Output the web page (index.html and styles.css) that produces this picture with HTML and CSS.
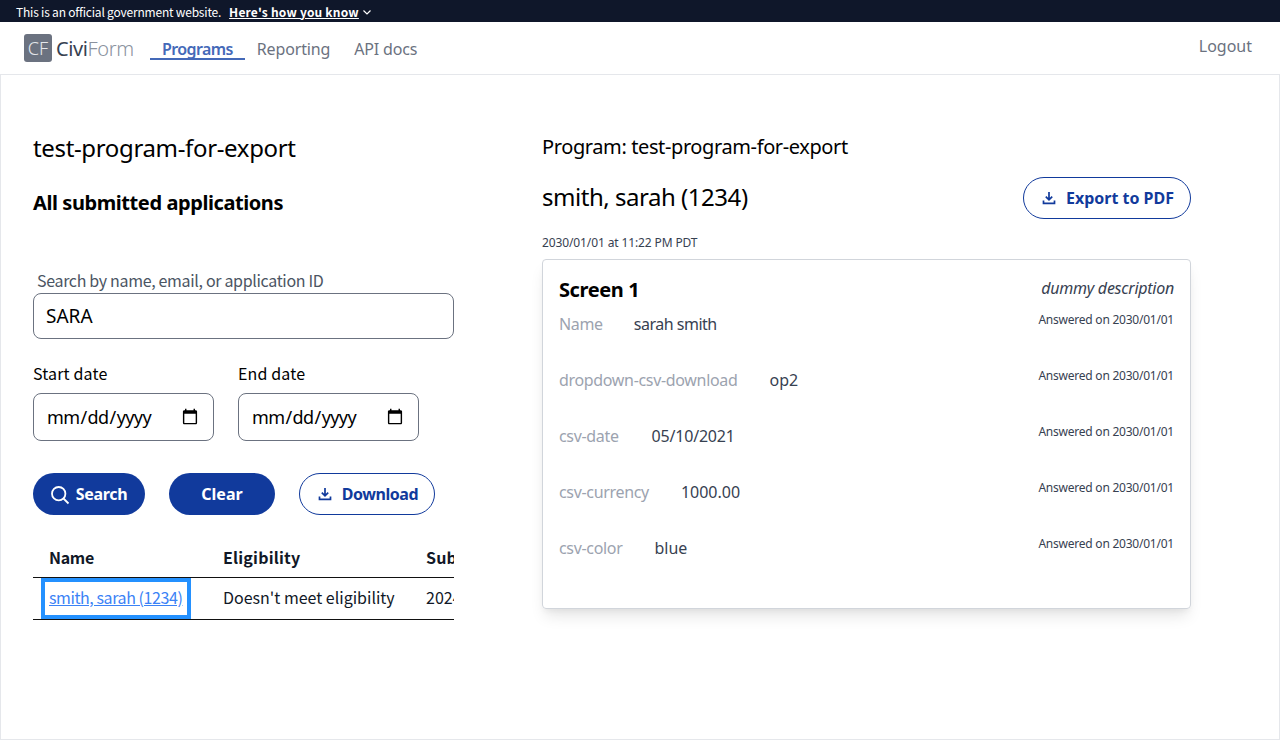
FILE: index.html
```html
<!DOCTYPE html>
<html lang="en">
<head>
  <meta charset="UTF-8">
  <title>CiviForm - test-program-for-export</title>
  <link rel="stylesheet" href="styles.css">
</head>
<body>
  <div class="gov-banner">
    <span class="gov-text">This is an official government website.</span>
    <a href="#" class="gov-link">Here's how you know</a>
    <svg class="gov-chevron" width="10" height="10" viewBox="0 0 10 10"><path d="M1.5 3.5 5 7l3.5-3.5" fill="none" stroke="#fff" stroke-width="1.2"/></svg>
  </div>

  <nav class="topnav">
    <div class="logo">
      <span class="logo-mark">CF</span>
      <span class="logo-text"><span class="logo-civi">Civi</span>Form</span>
    </div>
    <a href="#" class="nav-link active">Programs</a>
    <a href="#" class="nav-link">Reporting</a>
    <a href="#" class="nav-link">API docs</a>
    <a href="#" class="logout">Logout</a>
  </nav>

  <main class="page">
    <section class="left-col">
      <h1>test-program-for-export</h1>
      <h2>All submitted applications</h2>

      <label class="search-label" for="search">Search by name, email, or application ID</label>
      <input id="search" class="search-input" type="text" value="SARA">

      <div class="date-row">
        <div>
          <label class="date-label" for="start">Start date</label>
          <input id="start" class="date-input" type="date">
        </div>
        <div>
          <label class="date-label" for="end">End date</label>
          <input id="end" class="date-input" type="date">
        </div>
      </div>

      <div class="button-row">
        <button class="btn btn-solid btn-search">
          <svg width="20" height="20" viewBox="0 0 20 20"><circle cx="8.7" cy="8.7" r="6.7" fill="none" stroke="#fff" stroke-width="1.8"/><path d="m13.5 13.5 5 5" stroke="#fff" stroke-width="1.8" fill="none"/></svg>
          <span>Search</span>
        </button>
        <button class="btn btn-solid btn-clear">Clear</button>
        <button class="btn btn-outline btn-download">
          <svg width="14" height="14" viewBox="0 0 14 14"><path d="M7 1v7.5M3.8 5.6 7 8.8l3.2-3.2M1.5 9.5v2.8h11V9.5" fill="none" stroke="#113a9c" stroke-width="1.7"/></svg>
          <span>Download</span>
        </button>
      </div>

      <div class="table-wrap">
        <table class="apps">
          <thead>
            <tr><th class="col-name">Name</th><th class="col-elig">Eligibility</th><th class="col-date">Submission date</th></tr>
          </thead>
          <tbody>
            <tr>
              <td class="name-cell"><a href="#">smith, sarah (1234)</a></td>
              <td>Doesn't meet eligibility</td>
              <td>2024/01/01</td>
            </tr>
          </tbody>
        </table>
      </div>
    </section>

    <section class="right-col">
      <div class="program-name">Program: test-program-for-export</div>
      <div class="applicant-row">
        <div class="applicant">smith, sarah (1234)</div>
        <button class="btn btn-outline btn-export">
          <svg width="14" height="14" viewBox="0 0 14 14"><path d="M7 1v7.5M3.8 5.6 7 8.8l3.2-3.2M1.5 9.5v2.8h11V9.5" fill="none" stroke="#113a9c" stroke-width="1.7"/></svg>
          <span>Export to PDF</span>
        </button>
      </div>
      <div class="submitted">2030/01/01 at 11:22 PM PDT</div>

      <div class="card">
        <div class="card-head">
          <h3>Screen 1</h3>
          <em>dummy description</em>
        </div>
        <div class="answer">
          <div class="question">Name</div><div class="value value-name">sarah smith</div>
          <div class="answered">Answered on 2030/01/01</div>
        </div>
        <div class="answer">
          <div class="question">dropdown-csv-download</div><div class="value">op2</div>
          <div class="answered">Answered on 2030/01/01</div>
        </div>
        <div class="answer">
          <div class="question">csv-date</div><div class="value value-date">05/10/2021</div>
          <div class="answered">Answered on 2030/01/01</div>
        </div>
        <div class="answer">
          <div class="question">csv-currency</div><div class="value">1000.00</div>
          <div class="answered">Answered on 2030/01/01</div>
        </div>
        <div class="answer">
          <div class="question">csv-color</div><div class="value">blue</div>
          <div class="answered">Answered on 2030/01/01</div>
        </div>
      </div>
    </section>
  </main>
</body>
</html>
```

FILE: styles.css
```css
* {
  box-sizing: border-box;
}

html, body {
  height: 100%;
}

body {
  margin: 0;
  height: 740px;
  overflow: hidden;
  display: flex;
  flex-direction: column;
  font-family: "Noto Sans", sans-serif;
  color: #000;
  background: #fff;
}

.gov-banner {
  height: 22px;
  flex: none;
  background: #0f172a;
  color: #fff;
  padding-left: 16px;
  display: flex;
  align-items: center;
  font-family: "Noto Sans CJK SC", sans-serif;
  font-size: 12px;
}

.gov-text {
  letter-spacing: -0.2px;
}

.gov-link {
  color: #fff;
  font-weight: 700;
  margin-left: 8px;
  letter-spacing: 0.2px;
}

.gov-chevron {
  margin: 2px 0 0 3px;
}

.topnav {
  height: 52px;
  flex: none;
  display: flex;
  align-items: center;
  padding: 0 28px 0 24px;
  background: #fff;
}

.logo {
  display: flex;
  align-items: center;
  width: 126px;
}

.logo-mark {
  width: 28px;
  height: 28px;
  border-radius: 3px;
  background: #6b7280;
  color: #e5e7eb;
  font-size: 18px;
  font-weight: 300;
  display: flex;
  align-items: center;
  justify-content: center;
}

.logo-text {
  margin-left: 4px;
  font-size: 20px;
  font-weight: 300;
  color: #8b929e;
  letter-spacing: -0.4px;
}

.logo-civi {
  color: #374151;
  font-weight: 400;
}

.nav-link {
  color: #6b7280;
  font-size: 16px;
  letter-spacing: -0.15px;
  text-decoration: none;
  padding: 0 12px;
  height: 25px;
  line-height: 22px;
  margin-top: 4px;
}

.nav-link.active {
  color: #4469b8;
  font-weight: 600;
  letter-spacing: -0.6px;
  border-bottom: 2px solid #4469b8;
  height: 22px;
  margin-top: 2px;
}

.logout {
  margin-left: auto;
  color: #6b7280;
  font-size: 16px;
  text-decoration: none;
  margin-top: -4px;
}

.page {
  flex: 1;
  display: flex;
  border: 1px solid #e5e7eb;
  padding: 57px 0 0 32px;
}

.left-col {
  width: 421px;
  flex: none;
}

.right-col {
  width: 649px;
  flex: none;
  margin-left: 88px;
}

h1 {
  font-size: 24px;
  font-weight: 400;
  line-height: 32px;
  letter-spacing: -0.35px;
  margin: 0;
}

h2 {
  font-size: 20px;
  font-weight: 700;
  line-height: 28px;
  letter-spacing: -0.42px;
  margin: 25px 0 0;
}

.search-label {
  display: block;
  margin: 51px 0 0 4px;
  color: #4b5563;
  font-family: "Noto Sans CJK SC", sans-serif;
  font-size: 16px;
  line-height: 24px;
  letter-spacing: -0.33px;
}

.search-input {
  display: block;
  width: 421px;
  height: 46px;
  border: 1px solid #6b7280;
  border-radius: 8px;
  padding: 0 12px;
  font: 19px "Noto Sans", sans-serif;
  color: #000;
  margin-top: 1px;
}

.date-row {
  display: flex;
  gap: 24px;
  margin-top: 22px;
}

.date-label {
  display: block;
  font-family: "Noto Sans CJK SC", sans-serif;
  font-size: 16px;
  line-height: 24px;
  letter-spacing: 0.15px;
  margin-bottom: 8px;
}

.date-input {
  display: block;
  width: 181px;
  height: 48px;
  border: 1px solid #6b7280;
  border-radius: 8px;
  padding: 0 12px;
  font: 18px "Noto Sans", sans-serif;
  letter-spacing: -0.6px;
  color: #000;
  background: #fff;
}

.button-row {
  display: flex;
  gap: 24px;
  margin-top: 32px;
}

.btn {
  height: 42px;
  border-radius: 21px;
  font-family: "Noto Sans", sans-serif;
  font-size: 16px;
  font-weight: 700;
  display: flex;
  align-items: center;
  justify-content: center;
  cursor: pointer;
}

.btn-solid {
  background: #113a9c;
  color: #fff;
  border: none;
}

.btn-outline {
  background: #fff;
  color: #113a9c;
  border: 1px solid #113a9c;
}

.btn-search {
  width: 112px;
  gap: 6px;
  padding-right: 7px;
  letter-spacing: -0.3px;
}

.btn-search svg {
  margin-top: 2px;
}

.btn-clear {
  width: 106px;
}

.btn-download {
  width: 136px;
  gap: 10px;
  padding-left: 8px;
  letter-spacing: -0.45px;
}

.btn-export {
  width: 168px;
  gap: 10px;
  padding-left: 8px;
}

.table-wrap {
  margin-top: 21px;
  width: 421px;
  overflow: hidden;
}

.apps {
  border-collapse: collapse;
  table-layout: fixed;
  width: 600px;
  font-family: "Noto Sans CJK SC", sans-serif;
  font-size: 16px;
  color: #111827;
  white-space: nowrap;
}

.apps th {
  text-align: left;
  font-weight: 700;
  height: 41px;
  padding: 2px 16px 0;
  border-bottom: 1px solid #111;
  letter-spacing: 0.2px;
}

.apps .col-name {
  width: 174px;
  letter-spacing: -0.3px;
}

.apps .col-elig {
  width: 203px;
}

.apps .col-date {
  width: 223px;
}

.apps td {
  height: 41px;
  padding: 0 16px 2px;
  border-bottom: 1px solid #111;
}

.apps .name-cell {
  padding: 0;
}

.name-cell a {
  display: block;
  width: 150px;
  height: 41px;
  margin-left: 8px;
  border: 4px solid #2491ff;
  padding-left: 4px;
  line-height: 31px;
  letter-spacing: -0.42px;
  color: #3b82f6;
}

.program-name {
  font-size: 20px;
  line-height: 28px;
  letter-spacing: -0.39px;
  margin-top: 1px;
}

.applicant-row {
  display: flex;
  justify-content: space-between;
  align-items: center;
  margin-top: 16px;
}

.applicant {
  font-size: 24px;
  letter-spacing: -0.47px;
  margin-top: -4px;
}

.submitted {
  font-size: 12px;
  line-height: 16px;
  letter-spacing: -0.12px;
  color: #374151;
  margin-top: 16px;
}

.card {
  margin-top: 8px;
  height: 350px;
  border: 1px solid #d1d5db;
  border-radius: 4px;
  padding: 16px;
  box-shadow: 0 10px 15px -3px rgba(0, 0, 0, 0.1), 0 4px 6px -2px rgba(0, 0, 0, 0.05);
}

.card-head {
  display: flex;
  justify-content: space-between;
  align-items: flex-start;
  height: 48px;
}

.card-head h3 {
  font-size: 20px;
  font-weight: 700;
  line-height: 28px;
  letter-spacing: -0.4px;
  margin: 0;
}

.card-head em {
  color: #374151;
  font-size: 16px;
  line-height: 24px;
  letter-spacing: -0.25px;
}

.answer {
  display: flex;
  height: 56px;
  margin-top: -12px;
  margin-bottom: 12px;
  font-size: 16px;
  line-height: 24px;
}

.question {
  color: #9ca3af;
  letter-spacing: -0.33px;
  margin-right: 32px;
}

.value {
  color: #374151;
}

.value-name {
  letter-spacing: -0.5px;
  margin-left: -1px;
}

.value-date {
  letter-spacing: -0.2px;
  margin-left: 1px;
}

.answered {
  margin-left: auto;
  font-size: 12px;
  line-height: 16px;
  letter-spacing: -0.23px;
  color: #374151;
}
```
